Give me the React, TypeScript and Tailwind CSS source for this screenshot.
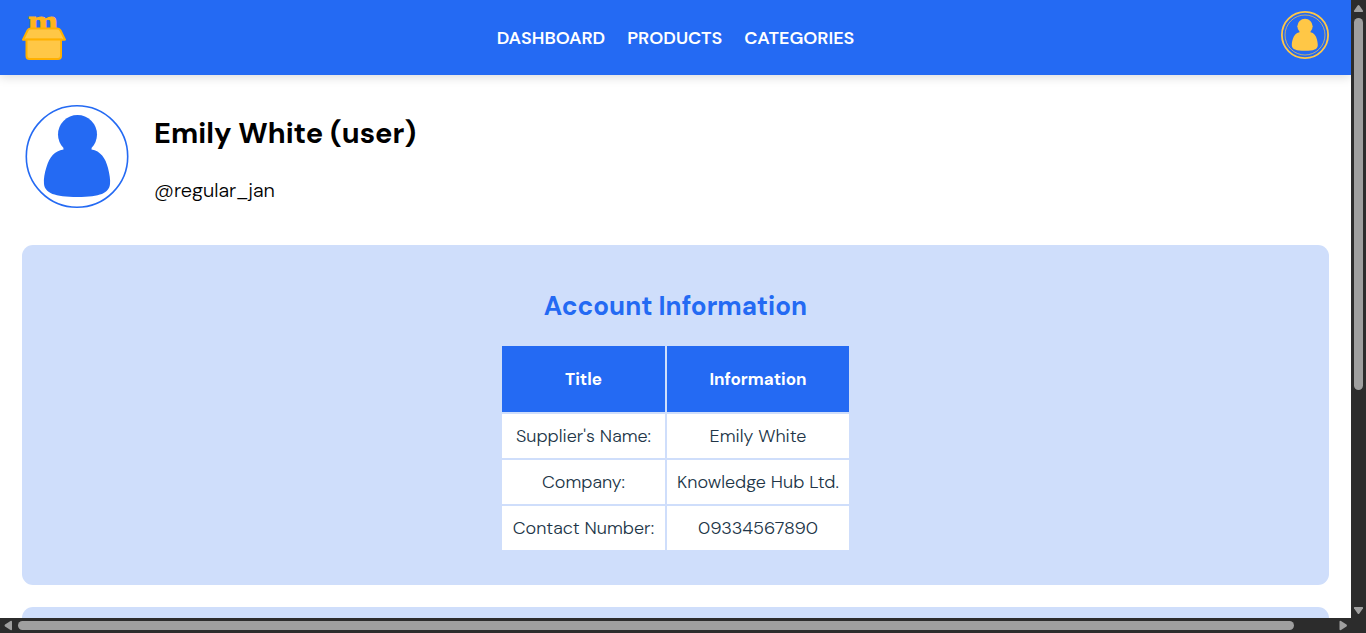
import type { ReactNode } from 'react';

const navItems = ['Dashboard', 'Products', 'Categories'];

const accountRows = [
  { title: "Supplier's Name:", value: 'Emily White' },
  { title: 'Company:', value: 'Knowledge Hub Ltd.' },
  { title: 'Contact Number:', value: '09334567890' },
];

function Logo() {
  return (
    <svg viewBox="0 0 44 44" className="h-11 w-11 overflow-visible" aria-hidden="true">
      <text x="6" y="18" fontSize="36" fontWeight="700" fill="#ffb41c" stroke="#ffb41c" strokeWidth="0.8" className="font-['Liberation_Serif',serif]">
        m
      </text>
      <path d="M8.5 12.5h27q2 0 3 2l4.5 9.2H1L5.500 14.500q1-2 3-2z" fill="#ffc746" stroke="#ffb000" strokeWidth="2" strokeLinejoin="round" />
      <path d="M4.500 23.500h34.500v16.500q0 3-3 3H7.500q-3 0-3-3z" fill="#ffc746" stroke="#ffb000" strokeWidth="2" />
    </svg>
  );
}

function PersonShape() {
  return (
    <>
      <circle cx="52" cy="29.500" r="19.500" />
      <path d="M38 43H66V44.500C75 46 80 53 82.500 63C84 69 85 75 84.500 79C83.500 88 75 92 52 92C29 92 19.500 88 18.500 79C18 74 19 68 21 62C24 52 29 46 38 44.500z" />
    </>
  );
}

function ProfileBadge() {
  return (
    <svg viewBox="0 0 48 48" className="h-12 w-12" fill="#ffc746" aria-hidden="true">
      <circle cx="24" cy="24" r="23.100" fill="none" stroke="#ffc746" strokeWidth="1.800" />
      <circle cx="24" cy="24" r="20" fill="none" stroke="#ffc746" strokeWidth="0.700" />
      <g transform="translate(3.600 3.800) scale(0.392)">
        <PersonShape />
      </g>
    </svg>
  );
}

function Card({ children }: { children?: ReactNode }) {
  return <section className="flex min-h-[340px] shrink-0 flex-col items-center rounded-[11px] bg-[#cfdefb] pt-10 pb-8">{children}</section>;
}

function VerticalScrollbar() {
  return (
    <div className="flex flex-col items-center bg-[#2c2c2c]" aria-hidden="true">
      <svg viewBox="0 0 15 18" className="h-[18px] w-[15px] shrink-0" fill="#9f9f9f">
        <path d="M6.600 5.500q.9-1 1.800 0l3.600 5.200q.5 1.300-.8 1.300H3.800q-1.300 0-.8-1.300z" />
      </svg>
      <div className="min-h-0 w-full grow">
        <div className="mx-auto h-[64%] w-[9px] rounded-full bg-[#9f9f9f]" />
      </div>
      <svg viewBox="0 0 15 18" className="h-[18px] w-[15px] shrink-0" fill="#9f9f9f">
        <path d="M6.600 13.500q.9 1 1.800 0l3.600-5.200q.5-1.300-.8-1.300H3.800q-1.300 0-.8 1.300z" />
      </svg>
    </div>
  );
}

function HorizontalScrollbar() {
  return (
    <div className="flex items-center bg-[#2c2c2c]" aria-hidden="true">
      <svg viewBox="0 0 18 15" className="h-[15px] w-[18px] shrink-0" fill="#9f9f9f">
        <path d="M5 6.600q-1 .9 0 1.800l5.500 3.600q1.500.5 1.500-.8V3.800q0-1.300-1.500-.8z" />
      </svg>
      <div className="grow">
        <div className="h-[9px] w-[97%] rounded-full bg-[#9f9f9f]" />
      </div>
      <svg viewBox="0 0 18 15" className="h-[15px] w-[18px] shrink-0" fill="#9f9f9f">
        <path d="M13.500 6.600q1 .9 0 1.800L8 12q-1.500.5-1.500-.8V3.800q0-1.300 1.500-.8z" />
      </svg>
    </div>
  );
}

export default function App() {
  return (
    <div className="grid h-screen grid-cols-[minmax(0,1fr)_15px] grid-rows-[minmax(0,1fr)_15px] bg-[#2c2c2c] font-['DM_Sans','Inter',sans-serif] text-black">
      <div className="flex flex-col overflow-hidden bg-white">
        <header className="grid h-[75px] shrink-0 grid-cols-[1fr_auto_1fr] items-center bg-[#246af3] px-[22px] shadow-[0_2px_10px_rgba(0,0,0,0.15)]">
          <a href="#home" aria-label="Home" className="justify-self-start">
            <Logo />
          </a>
          <nav className="flex gap-[22px] text-[18px] leading-6 font-semibold text-white uppercase">
            {navItems.map((item) => (
              <a key={item} href={'#' + item.toLowerCase()}>
                {item}
              </a>
            ))}
          </nav>
          <a href="#profile" aria-label="Profile" className="justify-self-end pb-1.5">
            <ProfileBadge />
          </a>
        </header>

        <main className="flex min-h-0 grow flex-col gap-[22px] px-[22px] pt-[26px]">
          <div className="flex h-[122px] shrink-0 gap-[22px]">
            <svg viewBox="0 0 110 110" className="h-[110px] w-[110px]" fill="#246af3" aria-hidden="true">
              <circle cx="55" cy="55.500" r="50.700" fill="none" stroke="#246af3" strokeWidth="1.600" />
              <g transform="translate(3.500 4)">
                <PersonShape />
              </g>
            </svg>
            <div className="flex flex-col gap-6 pt-3">
              <h1 className="text-[29px] leading-10 font-bold">Emily White (user)</h1>
              <p className="text-[20px] leading-[26px] font-light">@regular_jan</p>
            </div>
          </div>

          <Card>
            <h2 className="text-[26px] leading-[42px] font-bold text-[#246af3]">Account Information</h2>
            <table className="mt-[17px] border-separate border-spacing-[2px] text-center leading-6">
              <thead className="text-[17px]">
                <tr className="h-[66px] bg-[#246af3] text-white">
                  <th className="min-w-[163px] px-2.5 font-bold">Title</th>
                  <th className="min-w-[182px] px-2.5 font-bold">Information</th>
                </tr>
              </thead>
              <tbody className="text-[18px]">
                {accountRows.map((row) => (
                  <tr key={row.title} className="h-11 bg-white text-[#213547]">
                    <td className="px-2.5 font-light">{row.title}</td>
                    <td className="px-2.5 font-light">{row.value}</td>
                  </tr>
                ))}
              </tbody>
            </table>
          </Card>

          <Card />
        </main>
      </div>
      <VerticalScrollbar />
      <HorizontalScrollbar />
    </div>
  );
}
